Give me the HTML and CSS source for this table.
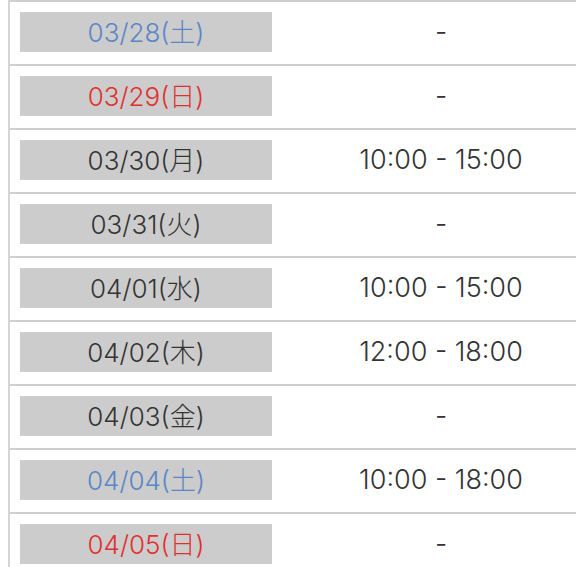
FILE: index.html
```html
<!DOCTYPE html>
<html lang="ja">
<head>
<meta charset="utf-8">
<link rel="stylesheet" href="styles.css">
</head>
<body>
<div class="schedule">
  <div class="row"><div class="date-cell"><span class="date sat">03/28(土)</span></div><div class="time">-</div></div>
  <div class="row"><div class="date-cell"><span class="date sun">03/29(日)</span></div><div class="time">-</div></div>
  <div class="row"><div class="date-cell"><span class="date">03/30(月)</span></div><div class="time">10:00 - 15:00</div></div>
  <div class="row"><div class="date-cell"><span class="date">03/31(火)</span></div><div class="time">-</div></div>
  <div class="row"><div class="date-cell"><span class="date">04/01(水)</span></div><div class="time">10:00 - 15:00</div></div>
  <div class="row"><div class="date-cell"><span class="date">04/02(木)</span></div><div class="time">12:00 - 18:00</div></div>
  <div class="row"><div class="date-cell"><span class="date">04/03(金)</span></div><div class="time">-</div></div>
  <div class="row"><div class="date-cell"><span class="date sat">04/04(土)</span></div><div class="time">10:00 - 18:00</div></div>
  <div class="row"><div class="date-cell"><span class="date sun">04/05(日)</span></div><div class="time">-</div></div>
</div>
</body>
</html>
```

FILE: styles.css
```css
html, body {
  margin: 0;
  padding: 0;
  background: #fff;
  overflow: hidden;
}
body {
  font-family: Inter, "Noto Sans CJK JP", sans-serif;
  color: #333;
}
.schedule {
  margin-left: 8px;
  width: 590px;
  border-left: 2px solid #d4d4d4;
}
.row {
  display: grid;
  grid-template-columns: 272px 1fr;
  border-top: 2px solid #cfcfcf;
  height: 62px;
}
.date-cell {
  padding: 10px 10px 12px 10px;
}
.date {
  display: flex;
  align-items: center;
  justify-content: center;
  box-sizing: border-box;
  width: 252px;
  height: 40px;
  padding-bottom: 3px;
  background: #cccccc;
  font-size: 26px;
  font-weight: 300;
  color: #333;
}
.date.sat { color: #5b86c6; }
.date.sun { color: #e0302e; }
.time {
  display: flex;
  align-items: center;
  justify-content: center;
  padding-bottom: 3px;
  font-size: 27px;
  font-weight: 300;
  color: #333;
}
```
